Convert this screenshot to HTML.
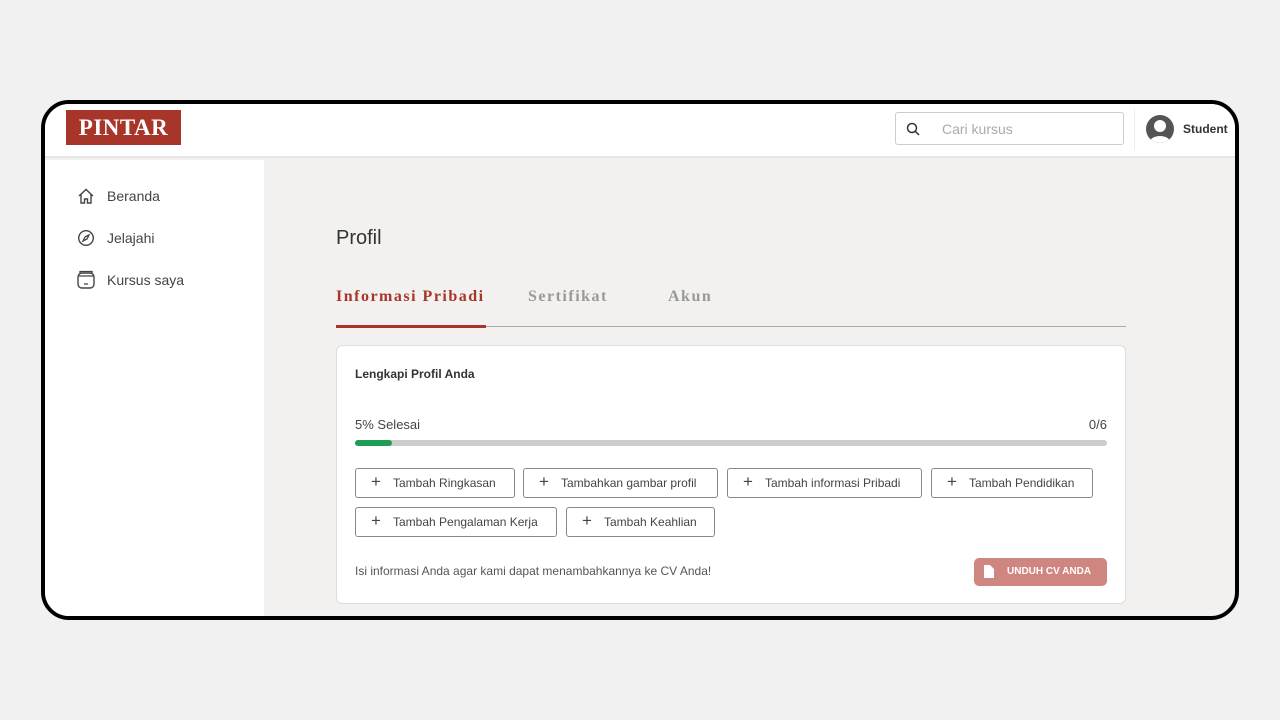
<!DOCTYPE html>
<html><head><meta charset="utf-8"><style>
*{box-sizing:border-box;margin:0;padding:0}
body{width:1280px;height:720px;background:#f1f1f1;font-family:"Liberation Sans",sans-serif;position:relative;overflow:hidden}
.frame{position:absolute;left:41px;top:100px;width:1198px;height:520px;border:4px solid #000;border-radius:28px;overflow:hidden;background:#f2f1f0}
.top{position:absolute;left:0;top:0;right:0;height:54px;background:#fff;border-bottom:2px solid #e6e6e6}
.logo{position:absolute;left:21px;top:6px;width:115px;height:35px;background:#a8352a;color:#fff;font-family:"Liberation Serif",serif;font-weight:bold;font-size:23px;text-align:center;line-height:35px;letter-spacing:0.5px}
.search{position:absolute;left:850px;top:8px;width:229px;height:33px;border:1px solid #ccc;border-radius:3px}
.search span{position:absolute;left:46px;top:8px;font-size:14px;color:#aaa}
.sep{position:absolute;left:1089px;top:4px;width:1px;height:42px;background:#eee}
.av{position:absolute;left:1101px;top:11px;width:28px;height:28px;border-radius:50%;background:#555;overflow:hidden}
.stu{position:absolute;left:1138px;top:18px;font-size:12px;font-weight:bold;color:#333}
.side{position:absolute;left:0;top:56px;width:219px;bottom:0;background:#fff}
.nav{position:absolute;left:62px;font-size:14px;color:#444}
.ic{position:absolute;left:-30px;top:-1px}
h1{position:absolute;left:291px;top:123px;font-size:20px;font-weight:normal;color:#333}
.tab{position:absolute;top:184px;font-size:16px;font-weight:bold;font-family:"Liberation Serif",serif;color:#999;letter-spacing:1.5px}
.line{position:absolute;left:291px;top:222px;width:790px;height:1px;background:#aaa}
.act{position:absolute;left:291px;top:221px;width:150px;height:3px;background:#a8352a}
.card{position:absolute;left:291px;top:241px;width:790px;height:259px;background:#fff;border:1px solid #ddd;border-radius:6px}
.btn{position:absolute;height:30px;border:1px solid #888;border-radius:3px;font-size:12px;color:#444;line-height:28px;padding-left:37px}
.btn:before{content:"+";position:absolute;left:15px;top:-1px;font-size:17px}
</style></head><body>
<div class="frame">
<div class="top">
<div class="logo">PINTAR</div>
<div class="search"><svg style="position:absolute;left:10px;top:9px" width="14" height="14" viewBox="0 0 14 14"><circle cx="6" cy="6" r="4.5" fill="none" stroke="#333" stroke-width="1.5"/><path d="M9.5 9.5L13 13" stroke="#333" stroke-width="1.5"/></svg><span>Cari kursus</span></div>
<div class="sep"></div>
<div class="av"><svg width="28" height="28" viewBox="0 0 28 28"><circle cx="14" cy="11" r="6" fill="#fff"/><ellipse cx="14" cy="27" rx="10" ry="6" fill="#fff"/></svg></div>
<div class="stu">Student</div>
</div>
<div class="side">
<div class="nav" style="top:28px"><svg class="ic" width="18" height="18" viewBox="0 0 18 18"><path d="M2 9L9 2.5L16 9M4 7.5V16h3.5v-4h3v4H14V7.5" fill="none" stroke="#444" stroke-width="1.4"/></svg>Beranda</div>
<div class="nav" style="top:70px"><svg class="ic" width="18" height="18" viewBox="0 0 18 18"><circle cx="9" cy="9" r="7.3" fill="none" stroke="#444" stroke-width="1.4"/><path d="M12 6L10 10L6 12L8 8Z" fill="none" stroke="#444" stroke-width="1.3"/></svg>Jelajahi</div>
<div class="nav" style="top:112px"><svg class="ic" width="20" height="20" viewBox="0 0 20 20" style="left:-31px;top:-3px"><rect x="2" y="4" width="16" height="15" rx="4" fill="none" stroke="#444" stroke-width="1.4"/><path d="M4 4V2.5h12V4M2 7h16M8 15h4" fill="none" stroke="#444" stroke-width="1.3"/></svg>Kursus saya</div>
</div>
<h1>Profil</h1>
<div class="tab" style="left:291px;color:#a8352a">Informasi Pribadi</div>
<div class="tab" style="left:483px">Sertifikat</div>
<div class="tab" style="left:623px">Akun</div>
<div class="line"></div><div class="act"></div>
<div class="card">
<div style="position:absolute;left:18px;top:21px;font-size:12px;font-weight:bold;color:#333">Lengkapi Profil Anda</div>
<div style="position:absolute;left:18px;top:71px;font-size:13px;color:#444">5% Selesai</div>
<div style="position:absolute;right:18px;top:71px;font-size:13px;color:#444">0/6</div>
<div style="position:absolute;left:18px;top:94px;width:752px;height:6px;border-radius:3px;background:#ccc"><div style="width:37px;height:6px;border-radius:3px;background:#1f9d55"></div></div>
<div class="btn" style="left:18px;top:122px;width:160px">Tambah Ringkasan</div>
<div class="btn" style="left:186px;top:122px;width:195px">Tambahkan gambar profil</div>
<div class="btn" style="left:390px;top:122px;width:195px">Tambah informasi Pribadi</div>
<div class="btn" style="left:594px;top:122px;width:162px">Tambah Pendidikan</div>
<div class="btn" style="left:18px;top:161px;width:202px">Tambah Pengalaman Kerja</div>
<div class="btn" style="left:229px;top:161px;width:149px">Tambah Keahlian</div>
<div style="position:absolute;left:18px;top:218px;font-size:12px;color:#555">Isi informasi Anda agar kami dapat menambahkannya ke CV Anda!</div>
<div style="position:absolute;left:637px;top:212px;width:133px;height:28px;border-radius:5px;background:#d08680;color:#fff;font-size:10px;font-weight:bold;line-height:28px;padding-left:33px"><svg style="position:absolute;left:10px;top:7px" width="10" height="13" viewBox="0 0 10 13"><path d="M0 0h6l4 4v9H0z" fill="#fff"/></svg>UNDUH CV ANDA</div>
</div>
</div>
</body></html>
